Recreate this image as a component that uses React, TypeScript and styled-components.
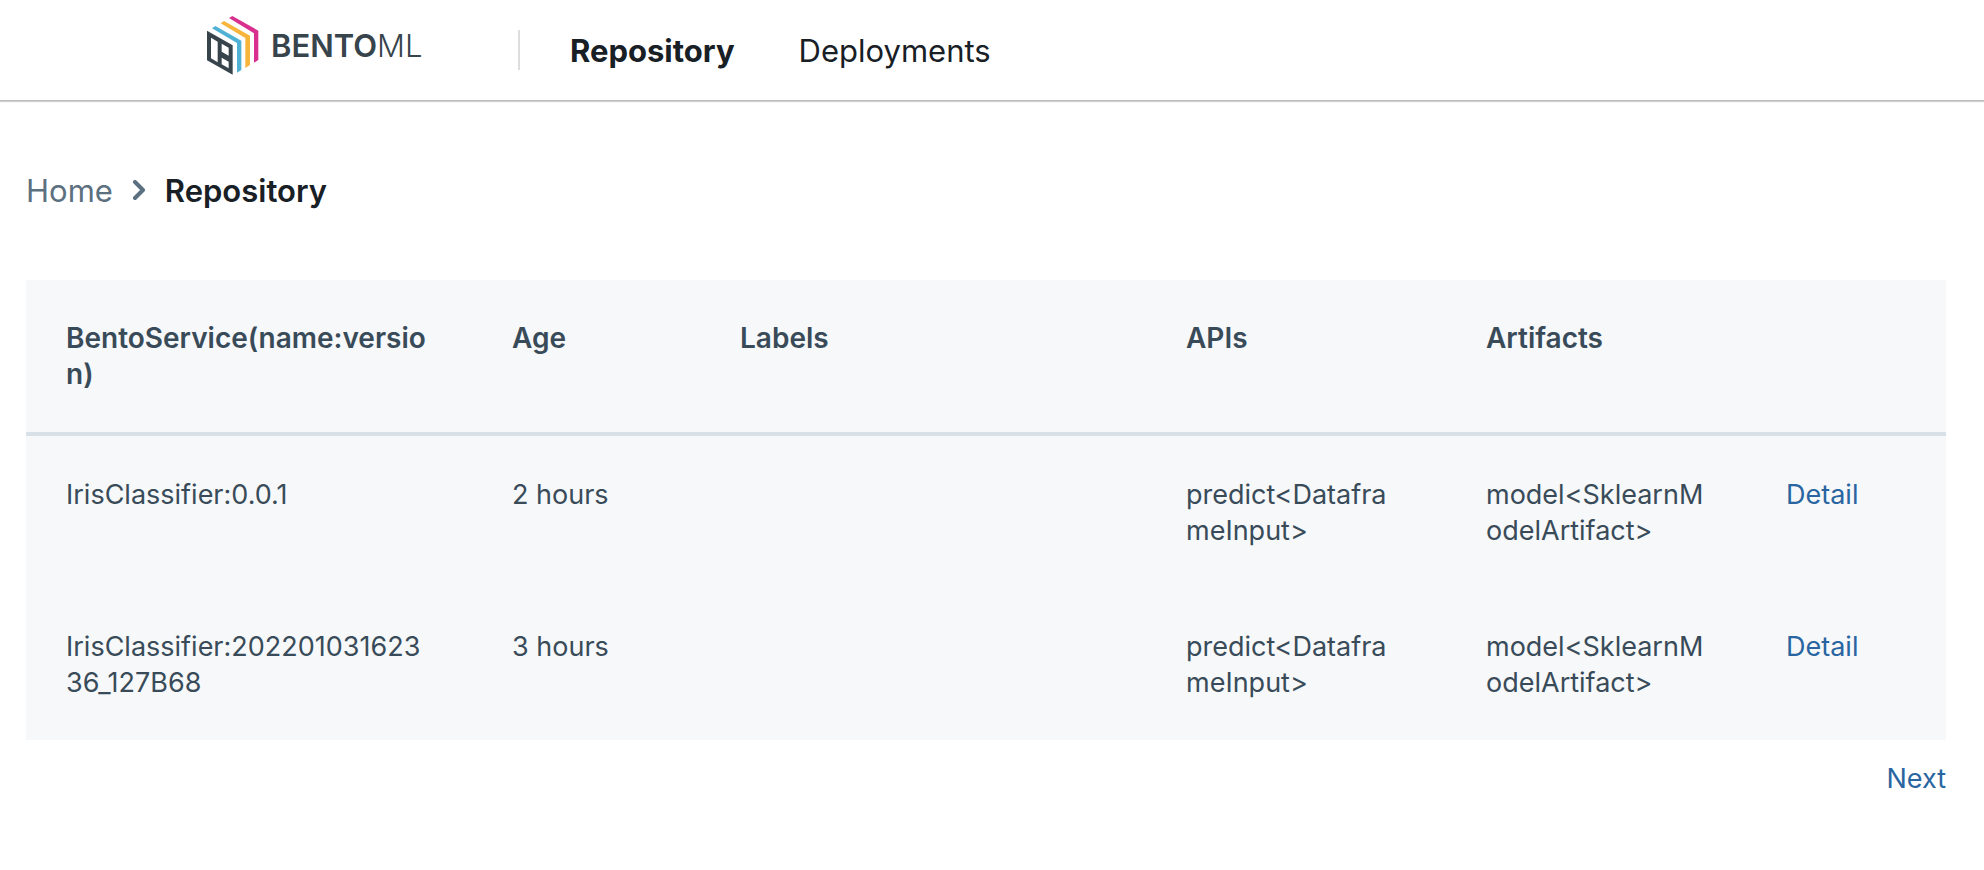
import React from "react";
import styled, { createGlobalStyle } from "styled-components";

const GlobalStyle = createGlobalStyle`
  * { box-sizing: border-box; }
  body {
    margin: 0;
    background: #fff;
    color: #182026;
    font-family: Inter, "Liberation Sans", sans-serif;
    font-size: 27px;
    line-height: 36px;
  }
  a { text-decoration: none; }
`;

const Navbar = styled.header`
  display: flex;
  align-items: center;
  height: 100px;
  padding-left: 207px;
  box-shadow: 0 0 0 1px rgba(16, 22, 26, 0.1), 0 2px 1px rgba(16, 22, 26, 0.2);
`;

const Brand = styled.a`
  display: flex;
  align-items: center;
  gap: 12px;
  width: 311px;
  padding-bottom: 8px;
  color: #37444c;
  font-size: 31px;
`;

const BrandName = styled.span`
  font-weight: 300;
`;

const BrandStrong = styled.span`
  font-weight: 600;
`;

const NavLinks = styled.nav`
  display: flex;
  align-items: center;
  gap: 64px;
  height: 40px;
  padding: 2px 0 0 50px;
  border-left: 2px solid #dcdddd;
`;

const NavLink = styled.a<{ $active?: boolean }>`
  color: #182026;
  font-size: 31px;
  font-weight: ${(p) => (p.$active ? 700 : 400)};
`;

const Page = styled.main`
  padding: 71px 38px 40px 26px;
`;

const Breadcrumbs = styled.nav`
  display: flex;
  align-items: center;
  gap: 19px;
  height: 40px;
  margin-bottom: 69px;
  font-size: 31px;
`;

const Crumb = styled.a`
  color: #5c7080;
`;

const CurrentCrumb = styled.span`
  font-weight: 600;
`;

const Table = styled.table`
  width: 100%;
  table-layout: fixed;
  border-collapse: separate;
  border-spacing: 0;
  background: #f6f8fa;
  color: #394b59;
`;

const Col = styled.col<{ $width?: number }>`
  width: ${(p) => (p.$width ? `${p.$width}px` : "auto")};
`;

const HeadCell = styled.th`
  padding: 40px;
  border-bottom: 4px solid #d9e1e8;
  font-size: 28px;
  font-weight: 600;
  text-align: left;
  vertical-align: top;
  overflow-wrap: anywhere;
`;

const Cell = styled.td`
  padding: 41px 40px 39px;
  vertical-align: top;
  overflow-wrap: anywhere;
`;

const ActionLink = styled.a`
  color: #2965a0;
`;

const Pager = styled.nav`
  display: flex;
  justify-content: flex-end;
  padding-top: 21px;
`;

const Logo = () => (
  <svg width="52" height="60" viewBox="51 48 156 180" aria-hidden="true">
    <path fill="#d9308f" d="M117 54 127 48 205 92V180L192 188V100Z" />
    <path fill="#f7b53c" d="M92 70 102 63 180 107V195L166 204V114Z" />
    <path fill="#4fb1d3" d="M66 85 76 78 154 122V210L141 218V129Z" />
    <path
      fill="#37444c"
      fillRule="evenodd"
      d="M51 92 128 136V224L51 181ZM63 113V175L83 187V125ZM95 131V155L116 167V143ZM95 173V193L116 205V185Z"
    />
  </svg>
);

const Chevron = () => (
  <svg width="14" height="22" viewBox="0 0 14 22" fill="none" aria-hidden="true">
    <path d="M3 2 11 10 3 18" stroke="#5c7080" strokeWidth="4" strokeLinecap="round" strokeLinejoin="round" />
  </svg>
);

const columns = [
  { title: "BentoService(name:version)" },
  { title: "Age", width: 228 },
  { title: "Labels" },
  { title: "APIs", width: 300 },
  { title: "Artifacts", width: 300 },
  { title: "", width: 200 },
];

const services = [
  { name: "IrisClassifier:0.0.1", age: "2 hours", labels: "", api: "predict<DataframeInput>", artifact: "model<SklearnModelArtifact>" },
  { name: "IrisClassifier:20220103162336_127B68", age: "3 hours", labels: "", api: "predict<DataframeInput>", artifact: "model<SklearnModelArtifact>" },
];

export default function App() {
  return (
    <>
      <GlobalStyle />
      <Navbar>
        <Brand href="#home">
          <Logo />
          <BrandName>
            <BrandStrong>BENTO</BrandStrong>ML
          </BrandName>
        </Brand>
        <NavLinks aria-label="Main">
          <NavLink href="#repository" $active aria-current="page">Repository</NavLink>
          <NavLink href="#deployments">Deployments</NavLink>
        </NavLinks>
      </Navbar>
      <Page>
        <Breadcrumbs aria-label="Breadcrumb">
          <Crumb href="#home">Home</Crumb>
          <Chevron />
          <CurrentCrumb aria-current="page">Repository</CurrentCrumb>
        </Breadcrumbs>
        <Table>
          <colgroup>
            {columns.map((c, i) => <Col key={i} $width={c.width} />)}
          </colgroup>
          <thead>
            <tr>
              {columns.map((c, i) => <HeadCell key={i} scope="col">{c.title}</HeadCell>)}
            </tr>
          </thead>
          <tbody>
            {services.map((s) => (
              <tr key={s.name}>
                <Cell>{s.name}</Cell>
                <Cell>{s.age}</Cell>
                <Cell>{s.labels}</Cell>
                <Cell>{s.api}</Cell>
                <Cell>{s.artifact}</Cell>
                <Cell><ActionLink href={`#${s.name}`}>Detail</ActionLink></Cell>
              </tr>
            ))}
          </tbody>
        </Table>
        <Pager aria-label="Pagination">
          <ActionLink href="#next">Next</ActionLink>
        </Pager>
      </Page>
    </>
  );
}
